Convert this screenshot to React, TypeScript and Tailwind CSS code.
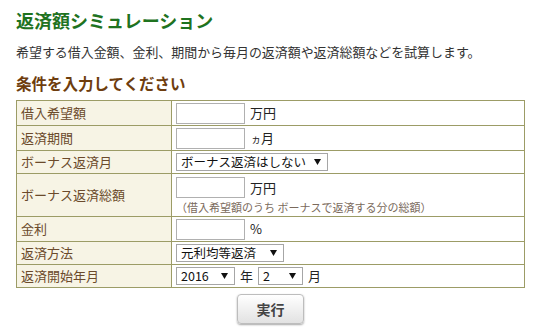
import React from "react";

const font = { fontFamily: '"Noto Sans CJK JP", "Noto Sans", sans-serif' };

const Arrow = () => (
    <svg width="7" height="6" viewBox="0 0 7 6" className="shrink-0 ml-[4px]">
        <polygon points="0,0 7,0 3.5,6" fill="#111" />
    </svg>
);

const FakeSelect = ({ value, width }: { value: string; width: string }) => (
    <div className={`flex items-center justify-between h-[18px] border border-[#a6a6a6] bg-white pl-[4px] pr-[6px] text-[12.5px] leading-none text-[#111] ${width}`}>
        <span className="whitespace-nowrap">{value}</span>
        <Arrow />
    </div>
);

const TextBox = () => <div className="w-[69px] h-[21px] border border-[#b0b0b0] bg-white" />;

const Row = ({ label, h, first, children }: { label: string; h: string; first?: boolean; children: React.ReactNode }) => (
    <div className={`flex ${h} ${first ? "" : "border-t border-[#9c9c66]"}`}>
        <div className="w-[155px] shrink-0 flex items-center pl-[4px] bg-[#f7f4e5] border-r border-[#9c9c66] text-[13px] text-[#6b4a2b]">
            {label}
        </div>
        <div className="flex-1 flex items-center pl-[4px] text-[13px] text-[#222]">{children}</div>
    </div>
);

export default function App() {
    return (
        <div className="w-[538px] h-[327px] bg-white px-[16px] overflow-hidden" style={font}>
            {/* TITLE */}
            <h1 className="mt-[7px] leading-[27px] text-[18px] font-bold text-[#1f731f]">返済額シミュレーション</h1>
            <p className="mt-[8px] leading-[20px] text-[12.95px] text-[#333] whitespace-nowrap">
                希望する借入金額、金利、期間から毎月の返済額や返済総額などを試算します。
            </p>
            <h2 className="mt-[9px] leading-[24px] text-[15.5px] font-bold text-[#6e3d0e]">条件を入力してください</h2>

            {/* FORM TABLE */}
            <div className="mt-[5px] w-[509px] border border-[#9c9c66]">
                <Row label="借入希望額" h="h-[24px]" first>
                    <TextBox />
                    <span className="ml-[5px]">万円</span>
                </Row>
                <Row label="返済期間" h="h-[25px]">
                    <TextBox />
                    <span className="ml-[6px]">
                        <span className="text-[10px]">ヵ</span>月
                    </span>
                </Row>
                <Row label="ボーナス返済月" h="h-[23px]">
                    <FakeSelect value="ボーナス返済はしない" width="w-[152px]" />
                </Row>
                <Row label="ボーナス返済総額" h="h-[43px]">
                    <div className="flex flex-col pt-[2px]">
                        <div className="flex items-center">
                            <TextBox />
                            <span className="ml-[5px]">万円</span>
                        </div>
                        <span className="mt-[1px] text-[11px] leading-[16px] text-[#7a6a5c] whitespace-nowrap">
                            （借入希望額のうち ボーナスで返済する分の総額）
                        </span>
                    </div>
                </Row>
                <Row label="金利" h="h-[25px]">
                    <TextBox />
                    <span className="ml-[5px]">%</span>
                </Row>
                <Row label="返済方法" h="h-[23px]">
                    <FakeSelect value="元利均等返済" width="w-[108px]" />
                </Row>
                <Row label="返済開始年月" h="h-[23px]">
                    <FakeSelect value="2016" width="w-[59px]" />
                    <span className="mx-[5px]">年</span>
                    <FakeSelect value="2" width="w-[45px]" />
                    <span className="ml-[5px]">月</span>
                </Row>
            </div>

            {/* SUBMIT */}
            <div className="flex justify-center w-[509px] mt-[6px]">
                <button className="w-[67px] h-[30px] rounded-[4px] border border-[#bdbdbd] bg-gradient-to-b from-white to-[#e2e2e2] shadow-[0_1px_2px_rgba(0,0,0,0.35)] text-[14px] font-bold text-[#444]">
                    実行
                </button>
            </div>
        </div>
    );
}
